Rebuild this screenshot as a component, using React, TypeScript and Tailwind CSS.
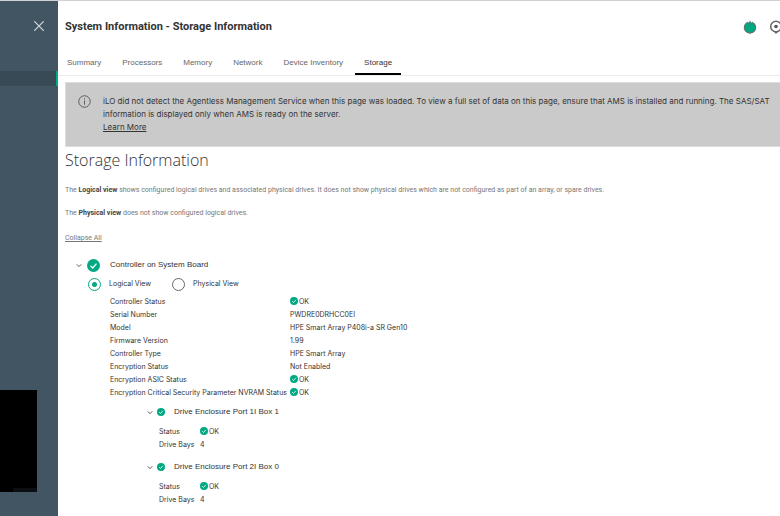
import { useState } from "react";
import type { ReactNode } from "react";

const tabs = [
  "Summary",
  "Processors",
  "Memory",
  "Network",
  "Device Inventory",
  "Storage",
];

const controllerRows = [
  { label: "Controller Status", value: "OK", ok: true },
  { label: "Serial Number", value: "PWDRE0DRHCC0EI" },
  { label: "Model", value: "HPE Smart Array P408i-a SR Gen10" },
  { label: "Firmware Version", value: "1.99" },
  { label: "Controller Type", value: "HPE Smart Array" },
  { label: "Encryption Status", value: "Not Enabled" },
  { label: "Encryption ASIC Status", value: "OK", ok: true },
  {
    label: "Encryption Critical Security Parameter NVRAM Status",
    value: "OK",
    ok: true,
  },
];

const enclosures = [
  { name: "Drive Enclosure Port 1I Box 1", bays: "4" },
  { name: "Drive Enclosure Port 2I Box 0", bays: "4" },
];

function CheckIcon({ className }: { className: string }) {
  return (
    <svg viewBox="0 0 24 24" className={className} aria-hidden="true">
      <circle cx="12" cy="12" r="12" fill="#01a982" />
      <path d="M6.5 12.5l4 4 7-8" fill="none" stroke="#fff" strokeWidth="2.4" />
    </svg>
  );
}

function Chevron() {
  return (
    <svg
      viewBox="0 0 6 6"
      className="size-[6px]"
      fill="none"
      stroke="#555"
      aria-hidden="true"
    >
      <path d="M0.8 2.4l2.2 2.2L5.2 2.4" />
    </svg>
  );
}

function StatusValue({ value, ok }: { value: string; ok?: boolean }) {
  return (
    <span className="flex items-center gap-px">
      {ok && <CheckIcon className="mb-px size-[8px]" />}
      {value}
    </span>
  );
}

function ViewRadio({
  checked,
  onChange,
  children,
}: {
  checked: boolean;
  onChange: () => void;
  children: ReactNode;
}) {
  return (
    <label className="flex items-center gap-2">
      <input
        type="radio"
        name="view"
        checked={checked}
        onChange={onChange}
        className="size-[13px] appearance-none rounded-full border border-[#666] bg-white checked:border-[#01a982] checked:bg-[radial-gradient(circle,#01a982_0_2px,white_3px)]"
      />
      {children}
    </label>
  );
}

function Sidebar() {
  return (
    <aside className="flex w-[58px] shrink-0 flex-col bg-[#425563]">
      <div className="flex h-[70px] justify-end pt-5 pr-[14px]">
        <button type="button" aria-label="Close menu" className="size-[10px]">
          <svg viewBox="0 0 10 10" fill="none" stroke="#d5dade">
            <path d="M0.3 0.3l9.4 9.4M9.7 0.3l-9.4 9.4" strokeWidth="1.2" />
          </svg>
        </button>
      </div>
      <div className="h-[15px] border-r-2 border-[#01a982] bg-[#394a57]" />
      <div className="mt-auto mb-6 flex h-[102px] w-[37px] items-end justify-end bg-black">
        <span className="h-1 w-6 bg-[#0b0f12]" />
      </div>
    </aside>
  );
}

export default function App() {
  const [view, setView] = useState("logical");

  return (
    <div className="flex min-h-screen border-t border-[#d0d1d6] bg-white font-[Inter,sans-serif] text-[#333]">
      <Sidebar />

      <main className="min-w-0 flex-1 overflow-hidden pl-[7px] whitespace-nowrap">
        <header className="-mr-[3px] flex h-[52px] items-center justify-between">
          <h1 className="font-[Roboto,sans-serif] text-[11px] font-bold">
            System Information - Storage Information
          </h1>
          <div className="flex items-center gap-[12px]">
            <button type="button" aria-label="Server power">
              <svg viewBox="0 0 14 14" className="size-[14px]" fill="none">
                <circle cx="7" cy="7.5" r="5.6" fill="#01a982" />
                <path
                  d="M4.8 2.2a5.7 5.7 0 1 0 4.4 0M7 0.8v4"
                  stroke="#5f6f73"
                  strokeWidth="1.1"
                />
              </svg>
            </button>
            <button type="button" aria-label="Locate server">
              <svg viewBox="0 0 14 14" className="size-[14px]" fill="none">
                <circle cx="7" cy="6.5" r="5.3" stroke="#666" strokeWidth="1.5" />
                <circle cx="7" cy="6.5" r="1.8" fill="#555" />
                <path d="M4.8 11.4h4.4L7 14z" fill="#666" />
              </svg>
            </button>
          </div>
        </header>

        {/* Tabs */}
        <nav className="-ml-[7px] flex gap-[3px] border-b border-[#ececec] font-['Liberation_Sans',sans-serif] text-[8px] text-[#666]">
          {tabs.map((tab) => (
            <a
              key={tab}
              href="#"
              className={
                tab === "Storage"
                  ? "h-[22px] border-b-2 border-black px-[9px] pt-[3px] leading-[13px] text-[#333]"
                  : "h-[22px] px-[9px] pt-[3px] leading-[13px]"
              }
            >
              {tab}
            </a>
          ))}
        </nav>

        {/* Notice */}
        <section className="mt-[6px] flex gap-3 border border-r-0 border-[#dcdcdc] bg-[#cacaca] pt-3 pb-3 pl-3 text-[8px] leading-[13px]">
          <svg
            viewBox="0 0 14 14"
            className="size-[13px] shrink-0"
            fill="none"
            stroke="#555"
            aria-hidden="true"
          >
            <circle cx="7" cy="7" r="6.2" />
            <path d="M7 6v4.5M7 3.5v1.3" />
          </svg>
          <div>
            <p>
              iLO did not detect the Agentless Management Service when this page
              was loaded. To view a full set of data on this page, ensure that
              AMS is installed and running. The SAS/SAT
            </p>
            <p>information is displayed only when AMS is ready on the server.</p>
            <a href="#" className="underline">
              Learn More
            </a>
          </div>
        </section>

        <h2 className="mt-[3px] font-['Open_Sans',sans-serif] text-[16px] leading-5 font-light">
          Storage Information
        </h2>

        <div className="mt-[15px] font-[Roboto,sans-serif] text-[7px] leading-[11px] text-[#777]">
          <p>
            The <b className="text-[#444]">Logical view</b> shows configured
            logical drives and associated physical drives. It does not show
            physical drives which are not configured as part of an array, or
            spare drives.
          </p>
          <p className="mt-3">
            The <b className="text-[#444]">Physical view</b> does not show
            configured logical drives.
          </p>
          <button type="button" className="mt-[14px] underline">
            Collapse All
          </button>
        </div>

        <section className="mt-[13px] pl-[11px] text-[7px]">
          <h3 className="flex h-4 items-center font-['Liberation_Sans',sans-serif] text-[8px]">
            <Chevron />
            <CheckIcon className="mr-[10px] ml-[5px] size-[13px]" />
            Controller on System Board
          </h3>

          <div className="ml-3 flex h-[22px] items-center gap-[21px]">
            <ViewRadio
              checked={view === "logical"}
              onChange={() => setView("logical")}
            >
              Logical View
            </ViewRadio>
            <ViewRadio
              checked={view === "physical"}
              onChange={() => setView("physical")}
            >
              Physical View
            </ViewRadio>
          </div>

          <table className="ml-[34px] leading-[13px]">
            <tbody>
              {controllerRows.map((row) => (
                <tr key={row.label}>
                  <th className="w-[180px] text-left font-normal" scope="row">
                    {row.label}
                  </th>
                  <td>
                    <StatusValue value={row.value} ok={row.ok} />
                  </td>
                </tr>
              ))}
            </tbody>
          </table>

          {enclosures.map((enclosure) => (
            <div key={enclosure.name} className="mt-[5px] mb-2 ml-[71px]">
              <h4 className="flex h-4 items-center font-['Liberation_Sans',sans-serif] text-[8px]">
                <Chevron />
                <CheckIcon className="mr-[9px] ml-1 size-[8px]" />
                {enclosure.name}
              </h4>
              <table className="mt-[5px] ml-3 leading-[13px]">
                <tbody>
                  <tr>
                    <th className="w-[41px] text-left font-normal" scope="row">
                      Status
                    </th>
                    <td>
                      <StatusValue value="OK" ok />
                    </td>
                  </tr>
                  <tr>
                    <th className="text-left font-normal" scope="row">
                      Drive Bays
                    </th>
                    <td>{enclosure.bays}</td>
                  </tr>
                </tbody>
              </table>
            </div>
          ))}
        </section>
      </main>
    </div>
  );
}
